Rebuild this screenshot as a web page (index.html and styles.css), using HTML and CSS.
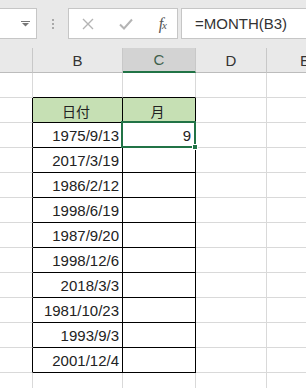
FILE: index.html
```html
<!DOCTYPE html>
<html lang="ja">
<head>
    <meta charset="UTF-8">
    <title>MONTH</title>
    <link rel="stylesheet" href="styles.css">
</head>
<body>
    <div class="formula-bar">
        <div class="name-box">
            <svg class="drop" width="9" height="6" viewBox="0 0 9 6"><rect x="0" y="0" width="9" height="1" fill="#777"/><path d="M1 2 H8 L4.5 5.5 Z" fill="#777"/></svg>
        </div>
        <div class="grip"><span></span><span></span><span></span></div>
        <div class="fx-buttons">
            <svg width="12" height="12" viewBox="0 0 12 12"><path d="M1 1 L11 11 M11 1 L1 11" stroke="#b4b4b4" stroke-width="1.4" fill="none"/></svg>
            <svg width="14" height="12" viewBox="0 0 14 12"><path d="M1 6.5 L5 10.5 L13 1.5" stroke="#b4b4b4" stroke-width="2" fill="none"/></svg>
            <span class="fx">f<small>x</small></span>
        </div>
        <div class="formula-input">=MONTH(B3)</div>
    </div>

    <table class="sheet">
        <colgroup>
            <col class="w-a"><col class="w-b"><col class="w-c"><col class="w-d"><col class="w-e">
        </colgroup>
        <thead>
            <tr>
                <th></th><th>B</th><th class="active">C</th><th>D</th><th>E</th>
            </tr>
        </thead>
        <tbody>
            <tr><td></td><td class="top"></td><td class="top"></td><td></td><td></td></tr>
            <tr><td class="edge"></td><td class="cell label">日付</td><td class="cell label">月</td><td></td><td></td></tr>
            <tr><td class="edge"></td><td class="cell">1975/9/13</td><td class="cell selected">9<div class="sel"><i></i></div></td><td></td><td></td></tr>
            <tr><td class="edge"></td><td class="cell">2017/3/19</td><td class="cell"></td><td></td><td></td></tr>
            <tr><td class="edge"></td><td class="cell">1986/2/12</td><td class="cell"></td><td></td><td></td></tr>
            <tr><td class="edge"></td><td class="cell">1998/6/19</td><td class="cell"></td><td></td><td></td></tr>
            <tr><td class="edge"></td><td class="cell">1987/9/20</td><td class="cell"></td><td></td><td></td></tr>
            <tr><td class="edge"></td><td class="cell">1998/12/6</td><td class="cell"></td><td></td><td></td></tr>
            <tr><td class="edge"></td><td class="cell">2018/3/3</td><td class="cell"></td><td></td><td></td></tr>
            <tr><td class="edge"></td><td class="cell">1981/10/23</td><td class="cell"></td><td></td><td></td></tr>
            <tr><td class="edge"></td><td class="cell">1993/9/3</td><td class="cell"></td><td></td><td></td></tr>
            <tr><td class="edge"></td><td class="cell">2001/12/4</td><td class="cell"></td><td></td><td></td></tr>
            <tr><td></td><td></td><td></td><td></td><td></td></tr>
        </tbody>
    </table>
</body>
</html>
```

FILE: styles.css
```css
* {
    margin: 0;
    padding: 0;
    box-sizing: border-box;
}
body {
    width: 306px;
    height: 388px;
    overflow: hidden;
    background-color: white;
    font-family: "Liberation Sans", "Noto Sans CJK JP", sans-serif;
    color: #222;
}
.formula-bar {
    height: 48px;
    background-color: #e9e9e9;
    display: flex;
    align-items: flex-start;
    padding-top: 8px;
}
.name-box {
    width: 38px;
    height: 31px;
    margin-left: -1px;
    background-color: white;
    border: 1px solid #c6c6c6;
    display: flex;
    justify-content: flex-end;
    align-items: center;
    padding-right: 6px;
}
.grip {
    width: 31px;
    height: 31px;
    display: flex;
    flex-direction: column;
    align-items: center;
    justify-content: center;
    gap: 2px;
}
.grip span {
    width: 2px;
    height: 2px;
    background-color: #a9a9a9;
}
.fx-buttons {
    width: 110px;
    height: 31px;
    background-color: white;
    border: 1px solid #c6c6c6;
    display: flex;
    align-items: center;
    justify-content: space-between;
    padding: 0 11px 0 13px;
}
.fx {
    font-family: "Liberation Serif", serif;
    font-style: italic;
    font-size: 16px;
    color: #555;
    letter-spacing: -1px;
}
.fx small {
    font-size: 11px;
}
.formula-input {
    flex: 1;
    height: 31px;
    margin-left: 3px;
    margin-right: -2px;
    background-color: white;
    border: 1px solid #c6c6c6;
    font-size: 15px;
    line-height: 29px;
    padding-left: 13px;
    color: #333;
}
.sheet {
    table-layout: fixed;
    width: 344px;
    border-spacing: 0;
}
.w-a { width: 33px; }
.w-b { width: 90px; }
.w-c { width: 73px; }
.w-d { width: 71px; }
.w-e { width: 77px; }
th {
    height: 25px;
    background-color: #e9e9e9;
    border-right: 1px solid #c8c8c8;
    border-bottom: 1px solid #bcbcbc;
    font-weight: normal;
    font-size: 15px;
    color: #333;
}
th.active {
    background-color: #d3d3d3;
    border-bottom: 2px solid #217346;
    color: #3f5f4c;
}
td {
    height: 25px;
    border-right: 1px solid #d9d9d9;
    border-bottom: 1px solid #d9d9d9;
    font-size: 15px;
    text-align: right;
    padding: 1px 3px 0 0;
}
td.edge {
    border-right-color: black;
}
td.top {
    border-bottom-color: black;
}
td.cell {
    border-right-color: black;
    border-bottom-color: black;
}
td.label {
    background-color: #c6e0b4;
    text-align: center;
    font-family: "Noto Sans CJK JP", sans-serif;
    font-size: 14px;
}
td.selected {
    position: relative;
    padding-right: 4px;
}
.sel {
    position: absolute;
    left: -2px;
    top: -2px;
    right: -1px;
    bottom: -1px;
    border: 2px solid #217346;
}
.sel i {
    position: absolute;
    right: -4px;
    bottom: -4px;
    width: 6px;
    height: 6px;
    background-color: #217346;
    border: 1px solid white;
}
```
